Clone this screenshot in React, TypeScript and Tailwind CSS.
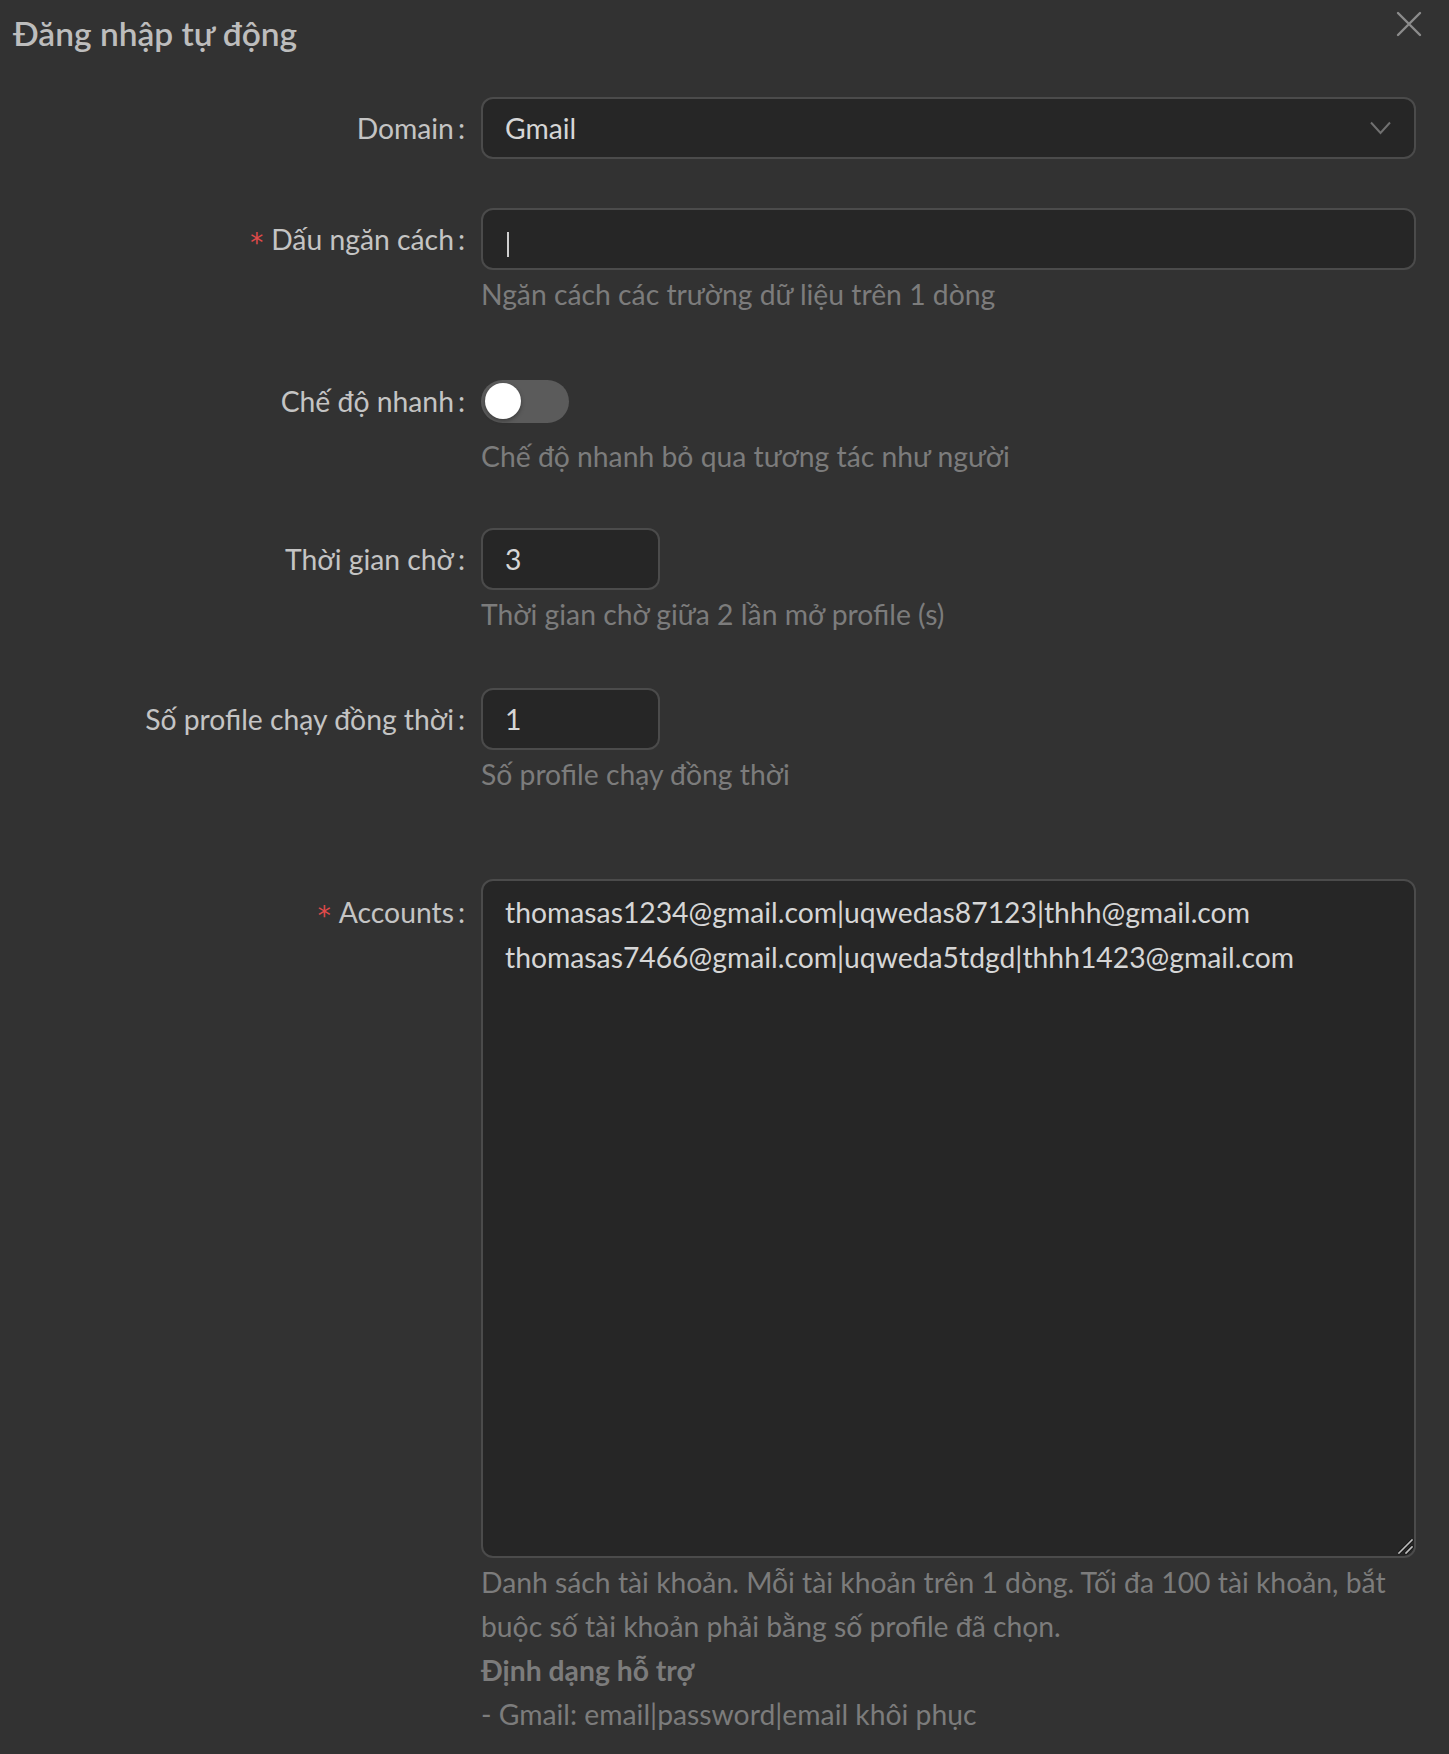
import React from "react";

const font = { fontFamily: "Lato, 'Noto Sans', sans-serif" };

function Label({ text, required }: { text: string; required?: boolean }) {
  return (
    <div className="flex h-[62px] items-center justify-end pr-[16px] text-[28.3px] text-[#c4c4c4]">
      {required && (
        <span className="relative top-[4px] mr-[8px] text-[26px] leading-none text-[#e04a4a]" style={{ fontFamily: "'DejaVu Sans', sans-serif" }}>
          *
        </span>
      )}
      <span>{text}</span>
      <span className="ml-[4px]">:</span>
    </div>
  );
}

function Help({ children }: { children: React.ReactNode }) {
  return <div className="pt-[2px] text-[28.3px] leading-[44px] text-[#7c7c7c]">{children}</div>;
}

function Item({
  label,
  required,
  help,
  mb,
  children,
}: {
  label: string;
  required?: boolean;
  help?: React.ReactNode;
  mb: string;
  children: React.ReactNode;
}) {
  return (
    <div className={`grid grid-cols-[468px_935px] ${mb}`}>
      <Label text={label} required={required} />
      <div>
        {children}
        {help && <Help>{help}</Help>}
      </div>
    </div>
  );
}

const inputCls =
  "flex h-[62px] items-center rounded-[12px] border-2 border-[#4b4b4b] bg-[#262626] px-[22px] text-[28.3px] text-[#d6d6d6]";

export default function App() {
  return (
    <div className="relative min-h-[1754px] w-[1449px] bg-[#323232] pl-[13px] pt-[8px]" style={font}>
      <button className="absolute right-[27px] top-[11px] text-[#8c8c8c]" aria-label="Close">
        <svg width="26" height="26" viewBox="0 0 26 26" fill="none" stroke="currentColor" strokeWidth="2.4" strokeLinecap="round">
          <path d="M2 2 L24 24 M24 2 L2 24" />
        </svg>
      </button>

      <h1 className="text-[33.5px] font-semibold leading-[50px] text-[#bdbdbd]">Đăng nhập tự động</h1>

      <div className="mt-[39px]">
        <Item label="Domain" mb="mb-[49px]">
          <div className={`${inputCls} justify-between pr-[23px]`}>
            <span>Gmail</span>
            <svg width="21" height="14" viewBox="0 0 21 14" fill="none" stroke="#707070" strokeWidth="2">
              <path d="M1 1.5 L10.5 12 L20 1.5" />
            </svg>
          </div>
        </Item>

        <Item label="Dấu ngăn cách" required help="Ngăn cách các trường dữ liệu trên 1 dòng" mb="mb-[54px]">
          <div className={inputCls}>
            <span className="ml-[2px] mt-[10px] h-[25px] w-[2px] bg-[#cfcfcf]" />
          </div>
        </Item>

        <Item label="Chế độ nhanh" help="Chế độ nhanh bỏ qua tương tác như người" mb="mb-[50px]">
          <div className="flex h-[62px] items-center">
            <div className="relative h-[43px] w-[88px] rounded-full bg-[#5b5b5b]">
              <div className="absolute left-[4px] top-[3.5px] h-[36px] w-[36px] rounded-full bg-white shadow-[0_2px_4px_rgba(0,0,0,0.35)]" />
            </div>
          </div>
        </Item>

        <Item label="Thời gian chờ" help="Thời gian chờ giữa 2 lần mở profile (s)" mb="mb-[52px]">
          <div className={`${inputCls} w-[179px]`}>3</div>
        </Item>

        <Item label="Số profile chạy đồng thời" help="Số profile chạy đồng thời" mb="mb-[83px]">
          <div className={`${inputCls} w-[179px]`}>1</div>
        </Item>

        <div className="grid grid-cols-[468px_935px]">
          <div className="pt-[2px]">
            <Label text="Accounts" required />
          </div>
          <div>
            <div className="relative">
              <textarea
                readOnly
                className="block h-[679px] w-full resize-none rounded-[12px] border-2 border-[#4b4b4b] bg-[#262626] px-[22px] py-[9px] text-[28.3px] leading-[44.5px] text-[#d6d6d6] outline-none"
                value={"thomasas1234@gmail.com|uqwedas87123|thhh@gmail.com\nthomasas7466@gmail.com|uqweda5tdgd|thhh1423@gmail.com"}
              />
              <svg className="pointer-events-none absolute bottom-[3px] right-[2px]" width="16" height="16" viewBox="0 0 16 16" fill="none" strokeLinecap="square">
                <path d="M14 1 L1 14 M14 8 L8 14" stroke="#1a1a1a" strokeWidth="3.4" />
                <path d="M14 1 L1 14 M14 8 L8 14" stroke="#bdbdbd" strokeWidth="1.6" />
              </svg>
            </div>
            <Help>
              <div>Danh sách tài khoản. Mỗi tài khoản trên 1 dòng. Tối đa 100 tài khoản, bắt buộc số tài khoản phải bằng số profile đã chọn.</div>
              <div className="font-bold">Định dạng hỗ trợ</div>
              <div>- Gmail: email|password|email khôi phục</div>
            </Help>
          </div>
        </div>
      </div>
    </div>
  );
}
